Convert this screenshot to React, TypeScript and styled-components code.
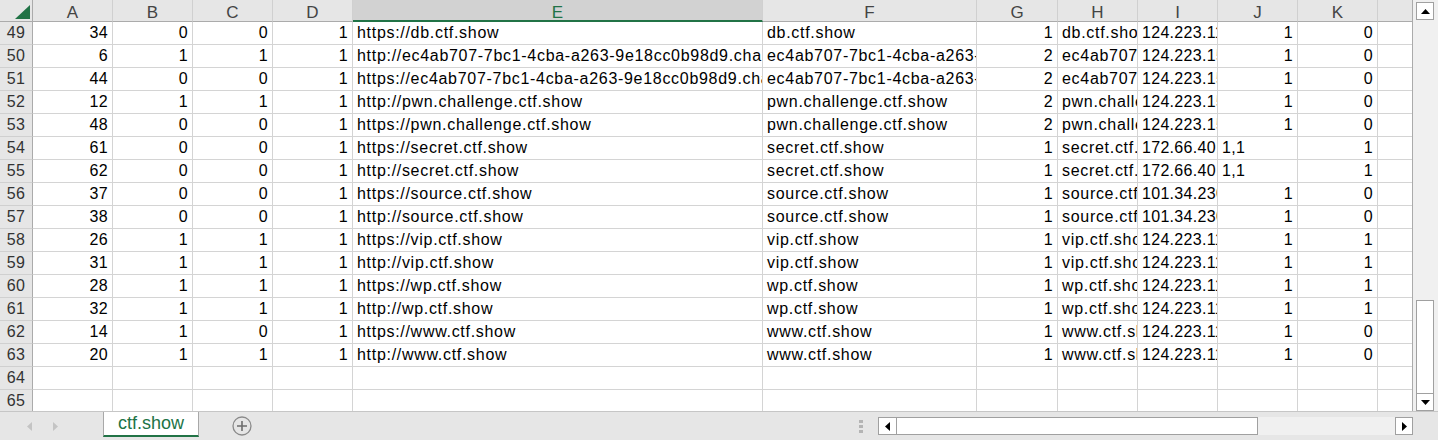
import React from "react";
import styled, { createGlobalStyle } from "styled-components";

type Cell = string | number | null;

const GREEN = "#217346";
const COLS = "33px 80px 80px 80px 80px 410px 214px 81px 80px 80px 80px 80px 35px";
const LETTERS = ["A", "B", "C", "D", "E", "F", "G", "H", "I", "J", "K", ""];
const SELECTED = 4;

const CHAL = "ec4ab707-7bc1-4cba-a263-9e18cc0b98d9.challenge.ctf.show";

const rows: Cell[][] = [
  [34, 0, 0, 1, "https://db.ctf.show", "db.ctf.show", 1, "db.ctf.show", "124.223.118.152", 1, 0],
  [6, 1, 1, 1, "http://" + CHAL, CHAL, 2, CHAL, "124.223.158.81", 1, 0],
  [44, 0, 0, 1, "https://" + CHAL, CHAL, 2, CHAL, "124.223.158.81", 1, 0],
  [12, 1, 1, 1, "http://pwn.challenge.ctf.show", "pwn.challenge.ctf.show", 2, "pwn.challenge.ctf.show", "124.223.158.81", 1, 0],
  [48, 0, 0, 1, "https://pwn.challenge.ctf.show", "pwn.challenge.ctf.show", 2, "pwn.challenge.ctf.show", "124.223.158.81", 1, 0],
  [61, 0, 0, 1, "https://secret.ctf.show", "secret.ctf.show", 1, "secret.ctf.show", "172.66.40.146", "1,1", 1],
  [62, 0, 0, 1, "http://secret.ctf.show", "secret.ctf.show", 1, "secret.ctf.show", "172.66.40.146", "1,1", 1],
  [37, 0, 0, 1, "https://source.ctf.show", "source.ctf.show", 1, "source.ctf.show", "101.34.230.77", 1, 0],
  [38, 0, 0, 1, "http://source.ctf.show", "source.ctf.show", 1, "source.ctf.show", "101.34.230.77", 1, 0],
  [26, 1, 1, 1, "https://vip.ctf.show", "vip.ctf.show", 1, "vip.ctf.show", "124.223.118.152", 1, 1],
  [31, 1, 1, 1, "http://vip.ctf.show", "vip.ctf.show", 1, "vip.ctf.show", "124.223.118.152", 1, 1],
  [28, 1, 1, 1, "https://wp.ctf.show", "wp.ctf.show", 1, "wp.ctf.show", "124.223.118.152", 1, 1],
  [32, 1, 1, 1, "http://wp.ctf.show", "wp.ctf.show", 1, "wp.ctf.show", "124.223.118.152", 1, 1],
  [14, 1, 0, 1, "https://www.ctf.show", "www.ctf.show", 1, "www.ctf.show", "124.223.118.152", 1, 0],
  [20, 1, 1, 1, "http://www.ctf.show", "www.ctf.show", 1, "www.ctf.show", "124.223.118.152", 1, 0],
  [null, null, null, null, null, null, null, null, null, null, null],
  [null, null, null, null, null, null, null, null, null, null, null],
];

const GlobalStyle = createGlobalStyle`
  html, body {
    margin: 0;
    padding: 0;
    background: #ffffff;
    overflow: hidden;
  }
  body {
    font-family: "Liberation Sans", Arial, sans-serif;
  }
`;

const Page = styled.div`
  width: 1438px;
  height: 440px;
  display: grid;
  grid-template-rows: 411px 29px;
  overflow: hidden;
`;

const Workspace = styled.div`
  display: flex;
  min-height: 0;
`;

const Sheet = styled.div`
  width: 1413px;
  height: 411px;
  overflow: hidden;
  display: grid;
  grid-template-columns: ${COLS};
  grid-auto-rows: 23px;
  grid-template-rows: 22px;
  align-content: start;
  border-right: 1px solid #ababab;
  box-sizing: border-box;
`;

const Corner = styled.div`
  background: #e6e6e6;
  border-right: 1px solid #ababab;
  border-bottom: 1px solid #ababab;
  box-sizing: border-box;
  display: flex;
  align-items: flex-end;
  justify-content: flex-end;
  padding: 0 2px 2px 0;
`;

const ColHeader = styled.div<{ $selected?: boolean }>`
  background: ${(p) => (p.$selected ? "#d2d2d2" : "#e6e6e6")};
  color: ${(p) => (p.$selected ? GREEN : "#444444")};
  border-right: 1px solid #d0d0d0;
  border-bottom: ${(p) => (p.$selected ? `2px solid ${GREEN}` : "1px solid #ababab")};
  box-sizing: border-box;
  font-size: 17px;
  line-height: 22px;
  padding-top: 2px;
  text-align: center;
  overflow: hidden;
`;

const RowHeader = styled.div`
  background: #e6e6e6;
  color: #333333;
  border-right: 1px solid #ababab;
  border-bottom: 1px solid #d0d0d0;
  box-sizing: border-box;
  font-size: 16px;
  line-height: 22px;
  text-align: center;
  letter-spacing: 0.4px;
`;

const Cell = styled.div<{ $text?: boolean; $tight?: boolean }>`
  border-right: 1px solid #d4d4d4;
  border-bottom: 1px solid #d4d4d4;
  box-sizing: border-box;
  overflow: hidden;
  white-space: nowrap;
  color: #000000;
  font-size: 16px;
  line-height: 22px;
  padding: ${(p) => (p.$text ? "0 0 0 4px" : "0 4px 0 0")};
  text-align: ${(p) => (p.$text ? "left" : "right")};
  letter-spacing: ${(p) => (p.$text && !p.$tight ? "0.7px" : "0.3px")};
`;

const VScroll = styled.div`
  width: 25px;
  background: #f0f0f0;
  display: flex;
  flex-direction: column;
  padding: 2px 4px 0 3px;
  box-sizing: border-box;
`;

const ArrowButton = styled.div<{ $w?: number; $h?: number }>`
  width: ${(p) => p.$w ?? 18}px;
  height: ${(p) => p.$h ?? 18}px;
  flex: none;
  box-sizing: border-box;
  background: #ffffff;
  border: 1px solid #a0a0a0;
  display: flex;
  align-items: center;
  justify-content: center;
`;

const Track = styled.div`
  flex: 1;
`;

const VThumb = styled.div`
  height: 93px;
  flex: none;
  background: #ffffff;
  border: 1px solid #a0a0a0;
  border-bottom: none;
  box-sizing: border-box;
`;

const BottomBar = styled.div`
  background: #e6e6e6;
  border-top: 1px solid #c6c6c6;
  box-sizing: border-box;
  display: flex;
  align-items: stretch;
`;

const NavArrows = styled.div`
  width: 103px;
  display: flex;
  align-items: center;
  gap: 21px;
  padding-left: 27px;
  box-sizing: border-box;
`;

const SheetTab = styled.div`
  width: 96px;
  background: #ffffff;
  border-left: 1px solid #a8a8a8;
  border-right: 1px solid #a8a8a8;
  border-bottom: 2px solid ${GREEN};
  box-sizing: border-box;
  height: 25px;
  color: ${GREEN};
  font-size: 18px;
  line-height: 22px;
  text-align: center;
`;

const AddSheet = styled.div`
  margin-left: 33px;
  display: flex;
  align-items: center;
`;

const Spacer = styled.div`
  flex: 1;
`;

const Grip = styled.div`
  width: 4px;
  margin-right: 15px;
  display: flex;
  flex-direction: column;
  justify-content: center;
  gap: 2px;
  & > span {
    width: 4px;
    height: 3px;
    background: #b4b4b4;
  }
`;

const HScroll = styled.div`
  width: 535px;
  height: 18px;
  margin-top: 5px;
  display: flex;
  background: #f0f0f0;
`;

const HThumb = styled.div`
  width: 361px;
  flex: none;
  background: #ffffff;
  border: 1px solid #a0a0a0;
  border-left: none;
  box-sizing: border-box;
`;

const RightGutter = styled.div`
  width: 25px;
`;

const Tri = ({ dir, color = "#000" }: { dir: "up" | "down" | "left" | "right"; color?: string }) => {
  const pts = {
    up: "0,5 4.5,0 9,5",
    down: "0,0 9,0 4.5,5",
    left: "5,0 5,9 0,4.5",
    right: "0,0 0,9 5,4.5",
  }[dir];
  const vertical = dir === "up" || dir === "down";
  return (
    <svg width={vertical ? 9 : 5} height={vertical ? 5 : 9} viewBox={vertical ? "0 0 9 5" : "0 0 5 9"}>
      <polygon points={pts} fill={color} />
    </svg>
  );
};

const isNumeric = (v: Cell) => typeof v === "string" && /^[\d.,]+$/.test(v);

export default function App() {
  return (
    <>
      <GlobalStyle />
      <Page>
        <Workspace>
          <Sheet>
            <Corner>
              <svg width="15" height="14" viewBox="0 0 15 14">
                <polygon points="15,0 15,14 0,14" fill={GREEN} />
              </svg>
            </Corner>
            {LETTERS.map((l, i) => (
              <ColHeader key={i} $selected={i === SELECTED}>
                {l}
              </ColHeader>
            ))}
            {rows.map((r, ri) => (
              <React.Fragment key={ri}>
                <RowHeader>{49 + ri}</RowHeader>
                {r.map((v, ci) => (
                  <Cell key={ci} $text={typeof v === "string"} $tight={isNumeric(v)}>
                    {v ?? ""}
                  </Cell>
                ))}
                <Cell />
              </React.Fragment>
            ))}
          </Sheet>
          <VScroll>
            <ArrowButton>
              <Tri dir="up" />
            </ArrowButton>
            <Track />
            <VThumb />
            <ArrowButton>
              <Tri dir="down" />
            </ArrowButton>
          </VScroll>
        </Workspace>
        <BottomBar>
          <NavArrows>
            <Tri dir="left" color="#c4c4c4" />
            <Tri dir="right" color="#c4c4c4" />
          </NavArrows>
          <SheetTab>ctf.show</SheetTab>
          <AddSheet>
            <svg width="20" height="20" viewBox="0 0 20 20">
              <circle cx="10" cy="10" r="9" fill="none" stroke="#8a8a8a" strokeWidth="1.3" />
              <path d="M10 5v10M5 10h10" stroke="#6e6e6e" strokeWidth="1.6" />
            </svg>
          </AddSheet>
          <Spacer />
          <Grip>
            <span />
            <span />
            <span />
          </Grip>
          <HScroll>
            <ArrowButton $w={19}>
              <Tri dir="left" />
            </ArrowButton>
            <HThumb />
            <Track />
            <ArrowButton>
              <Tri dir="right" />
            </ArrowButton>
          </HScroll>
          <RightGutter />
        </BottomBar>
      </Page>
    </>
  );
}
